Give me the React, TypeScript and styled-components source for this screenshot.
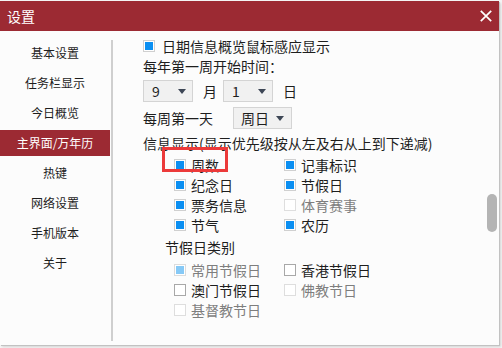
import React, { useLayoutEffect, useRef } from 'react';
import styled, { createGlobalStyle } from 'styled-components';

const GlobalStyle = createGlobalStyle`
  html, body { margin: 0; padding: 0; background: #ffffff; }
  body { font-family: "Noto Sans CJK SC", "Noto Sans", sans-serif; }
  #root { width: 502px; height: 348px; overflow: hidden; }
  * { box-sizing: border-box; }
`;

const Stage = styled.div`
  width: 502px;
  height: 348px;
  padding-top: 1px;
  background: #f4f4f4;
`;

const Window = styled.div`
  width: 499px;
  height: 344px;
  background: #fcfcfc;
  display: flex;
  flex-direction: column;
  box-shadow: 1px 1px 0 #c2c2c2, 2px 2px 2px rgba(0, 0, 0, 0.12);
`;

const TitleBar = styled.div`
  height: 30px;
  flex: none;
  background: #9c2a33;
  color: #ffffff;
  display: flex;
  align-items: center;
  justify-content: space-between;
  padding: 0 7px 0 7px;
  font-size: 14px;
`;

const Title = styled.span`
  line-height: 30px;
`;

const CloseButton = styled.span`
  display: flex;
  width: 12px;
  height: 12px;
`;

const Body = styled.div`
  flex: 1;
  display: flex;
  min-height: 0;
`;

const Sidebar = styled.nav`
  width: 111px;
  flex: none;
  padding-top: 9px;
  display: flex;
  flex-direction: column;
  gap: 4px;
`;

const NavItem = styled.div<{ $active?: boolean }>`
  width: 110px;
  height: 26px;
  line-height: 26px;
  text-align: center;
  font-size: 12px;
  color: ${p => (p.$active ? '#ffffff' : '#1e1e1e')};
  background: ${p => (p.$active ? '#9c2a33' : 'transparent')};
`;

const Divider = styled.div`
  width: 2px;
  flex: none;
  margin: 9px 0 4px;
  background: #cfcfcf;
`;

const Pane = styled.div`
  flex: 1;
  display: flex;
  min-width: 0;
  padding-top: 9px;
  padding-bottom: 4px;
`;

const ScrollArea = styled.div`
  flex: 1;
  overflow: hidden;
  padding-left: 30px;
`;

const ScrollInner = styled.div`
  min-height: 330px;
  display: flex;
  flex-direction: column;
  font-size: 14px;
  color: #1e1e1e;
`;

const Track = styled.div`
  width: 10px;
  flex: none;
  margin-right: 2px;
`;

const Thumb = styled.div`
  width: 10px;
  height: 38px;
  border-radius: 5px;
  background: #b4b4b4;
`;

const Line = styled.div<{ $mt?: number; $indent?: number; $gap?: number }>`
  height: 20px;
  display: flex;
  align-items: center;
  margin-top: ${p => p.$mt ?? 0}px;
  padding-left: ${p => p.$indent ?? 0}px;
  gap: ${p => p.$gap ?? 0}px;
  white-space: nowrap;
`;

const SelectRow = styled.div<{ $mt: number; $gap?: number }>`
  height: 22px;
  display: flex;
  align-items: center;
  margin-top: ${p => p.$mt}px;
  gap: ${p => p.$gap ?? 0}px;
  white-space: nowrap;
`;

const Select = styled.div<{ $w: number; $pl: number; $pr: number }>`
  width: ${p => p.$w}px;
  height: 22px;
  border: 1px solid #d4d4d4;
  background: #f1f1f1;
  display: flex;
  align-items: center;
  justify-content: space-between;
  padding: 0 ${p => p.$pr}px 0 ${p => p.$pl}px;
  font-size: 14px;
  color: #1e1e1e;
`;

const Arrow = styled.span`
  width: 0;
  height: 0;
  border-left: 4.5px solid transparent;
  border-right: 4.5px solid transparent;
  border-top: 5px solid #3e4756;
`;

const Unit = styled.span<{ $ml: number; $mr: number }>`
  margin: 0 ${p => p.$mr}px 0 ${p => p.$ml}px;
`;

const Grid = styled.div<{ $mt: number }>`
  display: grid;
  grid-template-columns: 110px 110px;
  grid-auto-rows: 20px;
  padding-left: 31px;
  margin-top: ${p => p.$mt}px;
`;

const Option = styled.div<{ $dim?: boolean }>`
  position: relative;
  display: flex;
  align-items: center;
  gap: 5px;
  white-space: nowrap;
  color: ${p => (p.$dim ? '#7e7e7e' : '#1e1e1e')};
`;

type BoxState = 'on' | 'onDim' | 'off' | 'offDim';

const borderOf: Record<BoxState, string> = {
  on: '#d0d0d0',
  onDim: '#dcdcdc',
  off: '#a8a8a8',
  offDim: '#dedede',
};
const fillOf: Record<BoxState, string> = {
  on: '#0b8ff2',
  onDim: '#86c9f6',
  off: 'transparent',
  offDim: 'transparent',
};

const Box = styled.span<{ $state: BoxState }>`
  width: 12px;
  height: 12px;
  flex: none;
  display: inline-flex;
  padding: 1px;
  background: #ffffff;
  border: 1px solid ${p => borderOf[p.$state]};
  &::after {
    content: '';
    flex: 1;
    background: ${p => fillOf[p.$state]};
  }
`;

const Highlight = styled.span`
  position: absolute;
  left: -12px;
  top: -8px;
  width: 66px;
  height: 25px;
  border: 3px solid #ec3a3a;
  pointer-events: none;
`;

const navItems = ['基本设置', '任务栏显示', '今日概览', '主界面/万年历', '热键', '网络设置', '手机版本', '关于'];

const infoOptions: { label: string; state: BoxState; dim?: boolean; mark?: boolean }[] = [
  { label: '周数', state: 'on', mark: true },
  { label: '记事标识', state: 'on' },
  { label: '纪念日', state: 'on' },
  { label: '节假日', state: 'on' },
  { label: '票务信息', state: 'on' },
  { label: '体育赛事', state: 'offDim', dim: true },
  { label: '节气', state: 'on' },
  { label: '农历', state: 'on' },
];

const holidayOptions: { label: string; state: BoxState; dim?: boolean }[] = [
  { label: '常用节假日', state: 'onDim', dim: true },
  { label: '香港节假日', state: 'off' },
  { label: '澳门节假日', state: 'off' },
  { label: '佛教节日', state: 'offDim', dim: true },
  { label: '基督教节日', state: 'offDim', dim: true },
];

export default function App() {
  const scrollRef = useRef<HTMLDivElement>(null);
  const scrollTop = 4;
  const thumbOffset = 154;

  useLayoutEffect(() => {
    if (scrollRef.current) scrollRef.current.scrollTop = scrollTop;
  }, []);

  return (
    <>
      <GlobalStyle />
      <Stage>
        <Window>
          <TitleBar>
            <Title>设置</Title>
            <CloseButton>
              <svg width="12" height="12" viewBox="0 0 12 12">
                <path d="M0.8 0.8 L11.2 11.2 M11.2 0.8 L0.8 11.2" stroke="#ffffff" strokeWidth="1.7" fill="none" />
              </svg>
            </CloseButton>
          </TitleBar>
          <Body>
            <Sidebar>
              {navItems.map(item => (
                <NavItem key={item} $active={item === '主界面/万年历'}>
                  {item}
                </NavItem>
              ))}
            </Sidebar>
            <Divider />
            <Pane>
              <ScrollArea ref={scrollRef}>
                <ScrollInner>
                  <Line $gap={7}>
                    <Box $state="on" />
                    <span>日期信息概览鼠标感应显示</span>
                  </Line>
                  <Line>每年第一周开始时间：</Line>
                  <SelectRow $mt={4}>
                    <Select $w={50} $pl={8} $pr={6}>
                      <span>9</span>
                      <Arrow />
                    </Select>
                    <Unit $ml={10} $mr={6}>月</Unit>
                    <Select $w={50} $pl={8} $pr={6}>
                      <span>1</span>
                      <Arrow />
                    </Select>
                    <Unit $ml={10} $mr={0}>日</Unit>
                  </SelectRow>
                  <SelectRow $mt={5} $gap={20}>
                    <span>每周第一天</span>
                    <Select $w={59} $pl={7} $pr={7}>
                      <span>周日</span>
                      <Arrow />
                    </Select>
                  </SelectRow>
                  <Line $mt={4}>信息显示(显示优先级按从左及右从上到下递减)</Line>
                  <Grid $mt={2}>
                    {infoOptions.map(o => (
                      <Option key={o.label} $dim={o.dim}>
                        <Box $state={o.state} />
                        <span>{o.label}</span>
                        {o.mark && <Highlight />}
                      </Option>
                    ))}
                  </Grid>
                  <Line $mt={2} $indent={22}>节假日类别</Line>
                  <Grid $mt={3}>
                    {holidayOptions.map(o => (
                      <Option key={o.label} $dim={o.dim}>
                        <Box $state={o.state} />
                        <span>{o.label}</span>
                      </Option>
                    ))}
                  </Grid>
                </ScrollInner>
              </ScrollArea>
              <Track>
                <Thumb style={{ marginTop: thumbOffset }} />
              </Track>
            </Pane>
          </Body>
        </Window>
      </Stage>
    </>
  );
}
